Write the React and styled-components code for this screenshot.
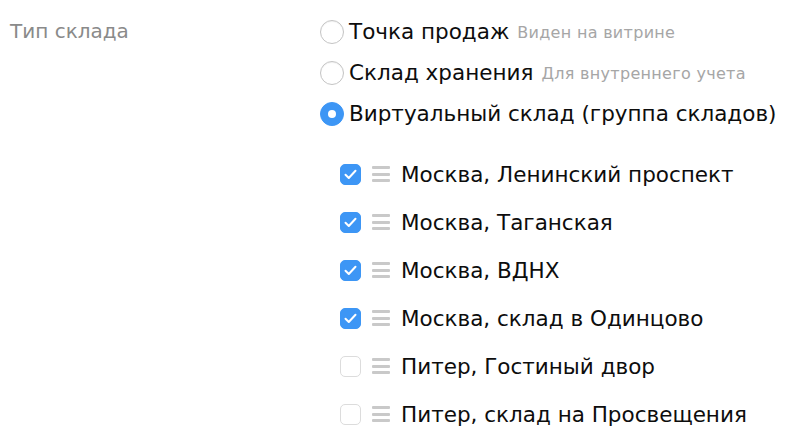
import React, { useState } from 'react';
import styled, { createGlobalStyle } from 'styled-components';

const GlobalStyle = createGlobalStyle`
  body {
    margin: 0;
    background: #fff;
    font-family: "DejaVu Sans", "Liberation Sans", sans-serif;
  }
`;

const Page = styled.div`
  display: grid;
  grid-template-columns: 320px 1fr;
  padding-top: 11px;
`;

const FieldLabel = styled.div`
  padding-left: 10px;
  height: 41px;
  line-height: 41px;
  font-size: 20px;
  color: #8a8a8a;
`;

const RadioList = styled.div`
  display: flex;
  flex-direction: column;
`;

const RadioRow = styled.label`
  display: flex;
  align-items: center;
  height: 41px;
  gap: 5px;
  font-size: 21.5px;
  color: #0d0d0d;
  white-space: nowrap;
`;

const RadioMark = styled.span`
  box-sizing: border-box;
  flex: none;
  width: 24px;
  height: 24px;
  border-radius: 50%;
  display: flex;
  align-items: center;
  justify-content: center;
  background: ${({ $checked }) => ($checked ? '#3d96f5' : '#fff')};
  border: 1px solid ${({ $checked }) => ($checked ? '#3d96f5' : '#c4c4c4')};
  box-shadow: ${({ $checked }) => ($checked ? 'none' : 'inset 0 1px 1px rgba(0,0,0,0.06)')};

  &::after {
    content: '';
    width: 8px;
    height: 8px;
    border-radius: 50%;
    background: #fff;
    display: ${({ $checked }) => ($checked ? 'block' : 'none')};
  }
`;

const Hint = styled.span`
  font-size: 16px;
  letter-spacing: 0.3px;
  color: #a6a6a6;
  margin-left: 3px;
  padding-top: 2px;
`;

const StoreList = styled.div`
  display: flex;
  flex-direction: column;
  margin-top: 16px;
  padding-left: 20px;
`;

const StoreRow = styled.div`
  display: flex;
  align-items: center;
  height: 48px;
  font-size: 21.5px;
  color: #0d0d0d;
  white-space: nowrap;
`;

const CheckBox = styled.span`
  box-sizing: border-box;
  flex: none;
  width: 21px;
  height: 21px;
  border-radius: 5px;
  display: flex;
  align-items: center;
  justify-content: center;
  background: ${({ $checked }) => ($checked ? '#3d96f5' : '#fff')};
  border: 1px solid ${({ $checked }) => ($checked ? '#3d96f5' : '#dcdcdc')};
`;

const DragHandle = styled.span`
  display: flex;
  flex-direction: column;
  justify-content: space-between;
  flex: none;
  width: 18px;
  height: 16px;
  margin: 0 11px;

  & > i {
    display: block;
    height: 3px;
    border-radius: 1px;
    background: #c9c9c9;
  }
`;

const Tick = () => (
  <svg width="13" height="11" viewBox="0 0 13 11">
    <path d="M1.5 5.8 L4.8 9 L11.5 1.8" fill="none" stroke="#fff" strokeWidth="2" strokeLinecap="round" strokeLinejoin="round" />
  </svg>
);

const types = [
  { id: 'shop', title: 'Точка продаж', hint: 'Виден на витрине' },
  { id: 'storage', title: 'Склад хранения', hint: 'Для внутреннего учета' },
  { id: 'virtual', title: 'Виртуальный склад (группа складов)' },
];

const stores = [
  { name: 'Москва, Ленинский проспект', on: true },
  { name: 'Москва, Таганская', on: true },
  { name: 'Москва, ВДНХ', on: true },
  { name: 'Москва, склад в Одинцово', on: true },
  { name: 'Питер, Гостиный двор', on: false },
  { name: 'Питер, склад на Просвещения', on: false },
];

const App = () => {
  const [type] = useState('virtual');

  return (
    <>
      <GlobalStyle />
      <Page>
        <FieldLabel>Тип склада</FieldLabel>
        <div>
          <RadioList>
            {types.map((t) => (
              <RadioRow key={t.id}>
                <RadioMark $checked={type === t.id} />
                <span>{t.title}</span>
                {t.hint && <Hint>{t.hint}</Hint>}
              </RadioRow>
            ))}
          </RadioList>
          {type === 'virtual' && (
            <StoreList>
              {stores.map((s) => (
                <StoreRow key={s.name}>
                  <CheckBox $checked={s.on}>{s.on && <Tick />}</CheckBox>
                  <DragHandle>
                    <i />
                    <i />
                    <i />
                  </DragHandle>
                  <span>{s.name}</span>
                </StoreRow>
              ))}
            </StoreList>
          )}
        </div>
      </Page>
    </>
  );
};

export default App;
